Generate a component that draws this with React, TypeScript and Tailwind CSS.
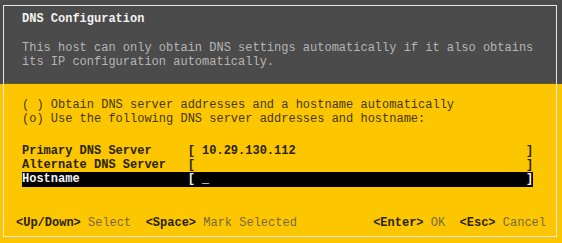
const fields = [
  { label: "Primary DNS Server", value: "10.29.130.112", active: false },
  { label: "Alternate DNS Server", value: "", active: false },
  { label: "Hostname", value: "_", active: true },
];

function fieldLine(label: string, value: string) {
  return label.padEnd(23) + "[ " + value.padEnd(45) + "]";
}

export default function App() {
  return (
    <div
      className="w-[562px] h-[243px] pt-[5px] pl-[3px] pr-[5px] pb-[6px] bg-[linear-gradient(to_bottom,#4b4b4b_84px,#fcc700_84px)] text-[12px] leading-[14px] whitespace-pre"
      style={{ fontFamily: '"Liberation Mono", "DejaVu Sans Mono", monospace' }}
    >
      <div className="h-full border border-[#e6e6e6] flex flex-col">
        {/* header */}
        <div className="h-[78px] bg-[#4b4b4b] pl-[18px] pt-[6px] border-b border-[#6b5a1e]">
          <div className="font-bold text-[#f2f2f2]">DNS Configuration</div>
          <div className="mt-[15px] text-[#b5b5b5]">
            <div>This host can only obtain DNS settings automatically if it also obtains</div>
            <div>its IP configuration automatically.</div>
          </div>
        </div>

        {/* body */}
        <div className="flex-1 bg-[#fcc700] flex flex-col">
          <div className="pl-[18px] pt-[14px] text-[#453700]">
            <div>( ) Obtain DNS server addresses and a hostname automatically</div>
            <div>(o) Use the following DNS server addresses and hostname:</div>
          </div>

          <div className="pl-[18px] mt-[18px] font-bold">
            {fields.map((f) => (
              <div
                key={f.label}
                className={
                  f.active
                    ? "w-[511px] h-[15px] bg-black text-[#f4f4f4]"
                    : "w-[511px] h-[14px] text-[#2b2200]"
                }
              >
                {fieldLine(f.label, f.value)}
              </div>
            ))}
          </div>

          <div className="mt-auto pl-[12px] pr-[10px] pb-[6px] flex justify-between">
            <div>
              <span className="font-bold text-[#2b2200]">&lt;Up/Down&gt;</span>
              <span className="text-[#7a683a]"> Select  </span>
              <span className="font-bold text-[#2b2200]">&lt;Space&gt;</span>
              <span className="text-[#7a683a]"> Mark Selected</span>
            </div>
            <div>
              <span className="font-bold text-[#2b2200]">&lt;Enter&gt;</span>
              <span className="text-[#7a683a]"> OK  </span>
              <span className="font-bold text-[#2b2200]">&lt;Esc&gt;</span>
              <span className="text-[#7a683a]"> Cancel</span>
            </div>
          </div>
        </div>
      </div>
    </div>
  );
}
